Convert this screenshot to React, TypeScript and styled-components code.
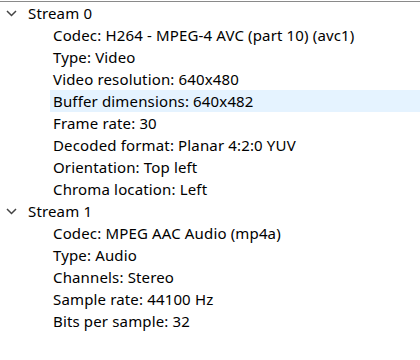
import React from "react";
import styled, { createGlobalStyle } from "styled-components";

const Global = createGlobalStyle`
  html, body { margin: 0; padding: 0; background: #fff; }
  body { font-family: "Segoe UI", "Noto Sans", sans-serif; }
`;

const Tree = styled.div`
  width: 420px;
  height: 360px;
  box-sizing: border-box;
  border-top: 1px solid #8a8a8a;
  margin-top: 1px;
  background: #fff;
  overflow: hidden;
`;

const Row = styled.div<{ $level: number; $selected?: boolean }>`
  height: 22px;
  display: flex;
  align-items: center;
  margin-left: ${(p) => (p.$level === 0 ? 0 : 50)}px;
  padding-left: ${(p) => (p.$level === 0 ? 6 : 3)}px;
  background: ${(p) => (p.$selected ? "#e5f3ff" : "transparent")};
  font-size: 15px;
  letter-spacing: 0.15px;
  color: #000;
  white-space: nowrap;
`;

const Toggle = styled.span`
  width: 22px;
  display: inline-flex;
  align-items: center;
  justify-content: flex-start;
`;

const Chevron = () => (
  <svg width="11" height="7" viewBox="0 0 11 7">
    <path d="M1 1 L5.5 5.5 L10 1" fill="none" stroke="#444" strokeWidth="1.5" />
  </svg>
);

const streams = [
  {
    name: "Stream 0",
    props: [
      "Codec: H264 - MPEG-4 AVC (part 10) (avc1)",
      "Type: Video",
      "Video resolution: 640x480",
      "Buffer dimensions: 640x482",
      "Frame rate: 30",
      "Decoded format: Planar 4:2:0 YUV",
      "Orientation: Top left",
      "Chroma location: Left",
    ],
  },
  {
    name: "Stream 1",
    props: [
      "Codec: MPEG AAC Audio (mp4a)",
      "Type: Audio",
      "Channels: Stereo",
      "Sample rate: 44100 Hz",
      "Bits per sample: 32",
    ],
  },
];

export default function App() {
  return (
    <>
      <Global />
      <Tree>
        {streams.map((s) => (
          <React.Fragment key={s.name}>
            <Row $level={0}>
              <Toggle>
                <Chevron />
              </Toggle>
              {s.name}
            </Row>
            {s.props.map((p) => (
              <Row key={p} $level={1} $selected={p.startsWith("Buffer")}>
                {p}
              </Row>
            ))}
          </React.Fragment>
        ))}
      </Tree>
    </>
  );
}
